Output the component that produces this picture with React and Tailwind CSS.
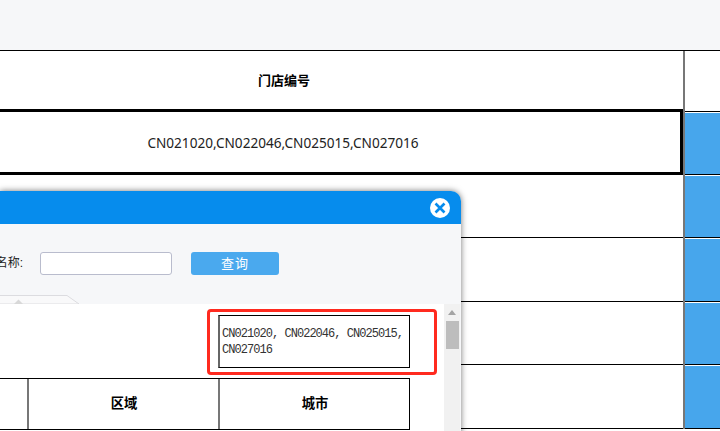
import React from "react";

const FONT = "font-['Liberation_Sans','Noto_Sans_CJK_SC',sans-serif]";

function SideCell({ height, blue }) {
  return (
    <div className="border-b border-black pt-[1px]" style={{ height }}>
      {blue && <div className="h-full bg-[#47a6ec]" />}
    </div>
  );
}

function CloseIcon() {
  return (
    <svg width="20" height="20" viewBox="0 0 20 20">
      <circle cx="10" cy="10" r="10" fill="#fff" />
      <path d="M5.5 5.5L14.5 14.5M14.5 5.5L5.5 14.5" stroke="#068ced" strokeWidth="2.6" />
    </svg>
  );
}

export default function App() {
  return (
    <div className={`relative w-[720px] h-[431px] overflow-hidden bg-white ${FONT}`}>
      {/* Page behind the dialog */}
      <div className="h-[50px] bg-[#f6f7f9] border-b border-black box-content" />
      <div className="flex">
        <div className="w-[800px] -ml-[117px] shrink-0">
          <div className="h-[58px] pl-[2px] pt-[1px] flex items-center justify-center text-[13px] font-bold text-black">
            门店编号
          </div>
          <div className="h-[66px] pt-[2px] pl-[3px] border-y-[3px] border-r-[3px] border-black flex items-center justify-center font-['Noto_Sans',sans-serif] text-[13.6px] text-[#222]">
            CN021020,CN022046,CN025015,CN027016
          </div>
          <div className="h-[63px] border-b border-black" />
          <div className="h-[64px] border-b border-black" />
          <div className="h-[63px] border-b border-black" />
          <div className="h-[64px] border-b border-black" />
        </div>
        <div className="flex-1 border-l-2 border-[#777]">
          <SideCell height={61} />
          <SideCell height={63} blue />
          <SideCell height={63} blue />
          <SideCell height={64} blue />
          <SideCell height={63} blue />
          <SideCell height={64} blue />
        </div>
      </div>

      {/* Dialog */}
      <div className="absolute left-0 top-[191px] w-[461px] h-[260px] rounded-tr-[10px] bg-[#f6f7f9] overflow-hidden shadow-[0_0_6px_rgba(0,0,0,0.55)]">
        <div className="h-[33px] bg-[#068ced] flex items-center justify-end pr-[11px]">
          <CloseIcon />
        </div>
        <div className="h-[80px] relative">
          <div className="flex items-center pt-[28px]">
            <div className="w-[40px] shrink-0 flex justify-end pr-[17px]">
              <span className="shrink-0 text-[12px] text-[#222] whitespace-nowrap leading-[23px]">名称:</span>
            </div>
            <div className="w-[132px] h-[23px] bg-white border border-[#b9bccd] rounded-[3px]" />
            <button className="ml-[19px] w-[88px] h-[23px] bg-[#4aa9ee] rounded-[3px] text-white text-[13px] tracking-[1px]">
              查询
            </button>
          </div>
          {/* Tab edge above the panel */}
          <svg className="absolute left-0 bottom-0" width="80" height="9" viewBox="0 0 80 9">
            <path d="M-1 0.5H67L79 9H-1Z" fill="#f9f9fa" stroke="#dcdce0" />
            <path d="M14 9L18.5 4.5L23 9Z" fill="#d8d8d8" />
          </svg>
        </div>
        <div className="flex h-[147px]">
          <div className="w-[444px] bg-white">
            <div className="w-[410px] h-[75px] border-b border-black">
              <div className="ml-[218px] pt-[11px]">
                <div className="w-[192px] h-[53px] border border-black border-l-2 border-l-[#666] pl-[2px] pr-0 pt-[10px] font-['Liberation_Mono','Noto_Sans_CJK_SC',monospace] text-[12px] leading-[16px] tracking-[-0.96px] text-[#333]">
                  CN021020, CN022046, CN025015, CN027016
                </div>
              </div>
            </div>
            <div className="w-[410px] h-[51px] flex border-b border-black text-[13.33px] font-bold text-black">
              <div className="w-[29px] border-r-2 border-[#777]" />
              <div className="w-[191px] pl-[1px] border-r-2 border-[#777] flex items-center justify-center">区域</div>
              <div className="w-[190px] pl-[1px] border-r border-black flex items-center justify-center">城市</div>
            </div>
          </div>
          <div className="w-[16px] bg-[#f1f1f1] flex flex-col items-center">
            <div className="mt-[6px] w-0 h-0 border-x-[4px] border-x-transparent border-b-[5px] border-b-[#a3a3a3]" />
            <div className="mt-[6px] w-[13px] h-[28px] bg-[#bdbdbd]" />
          </div>
        </div>
      </div>

      {/* Red annotation */}
      <div className="absolute left-[207px] top-[309px] w-[230px] h-[66px] border-[3px] border-[#ff2a1f] rounded-[4px]" />
    </div>
  );
}
